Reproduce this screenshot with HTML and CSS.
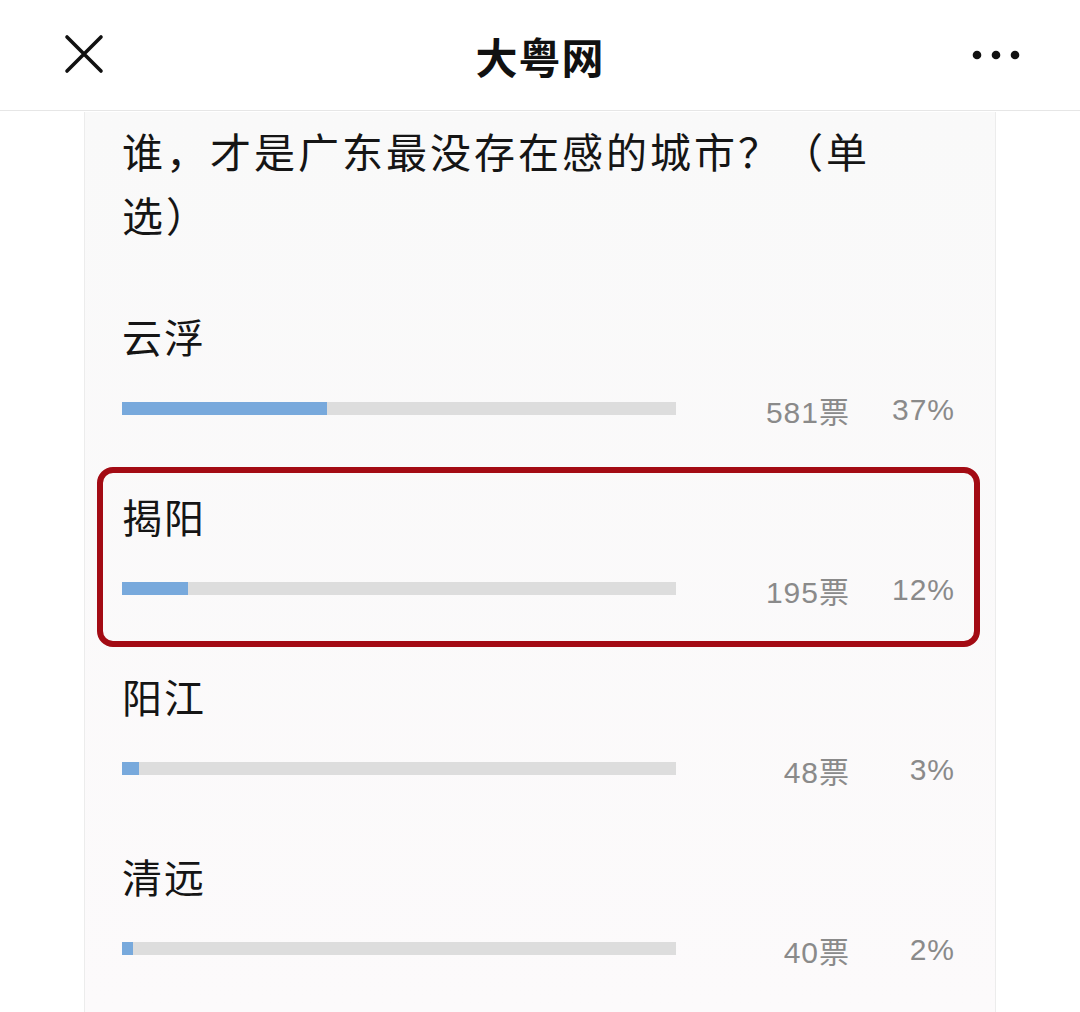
FILE: index.html
```html
<!DOCTYPE html>
<html lang="zh-CN">
<head>
<meta charset="utf-8">
<link rel="stylesheet" href="styles.css">
</head>
<body>
<header class="topbar">
  <svg class="close" width="40" height="40" viewBox="0 0 40 40"><path d="M3 3 L37 37 M37 3 L3 37" stroke="#111" stroke-width="3.6" stroke-linecap="round"/></svg>
  <div class="title">大粤网</div>
  <svg class="more" width="50" height="12" viewBox="0 0 50 12"><circle cx="6" cy="6" r="4.3" fill="#111"/><circle cx="25" cy="6" r="4.3" fill="#111"/><circle cx="44" cy="6" r="4.3" fill="#111"/></svg>
</header>
<main class="card">
  <div class="question">谁，才是广东最没存在感的城市？（单选）</div>
  <div class="options">
    <div class="option">
      <div class="label">云浮</div>
      <div class="row"><div class="bar"><div class="fill" style="width:37%"></div></div><div class="votes">581票</div><div class="pct">37%</div></div>
    </div>
    <div class="option">
      <div class="label">揭阳</div>
      <div class="row"><div class="bar"><div class="fill" style="width:12%"></div></div><div class="votes">195票</div><div class="pct">12%</div></div>
      <div class="highlight"></div>
    </div>
    <div class="option">
      <div class="label">阳江</div>
      <div class="row"><div class="bar"><div class="fill" style="width:3%"></div></div><div class="votes">48票</div><div class="pct">3%</div></div>
    </div>
    <div class="option">
      <div class="label">清远</div>
      <div class="row"><div class="bar"><div class="fill" style="width:2%"></div></div><div class="votes">40票</div><div class="pct">2%</div></div>
    </div>
  </div>
</main>
</body>
</html>
```
FILE: styles.css
```css
* { box-sizing: border-box; }
html, body { margin: 0; padding: 0; }
body {
  width: 1080px;
  height: 1012px;
  overflow: hidden;
  background: #fff;
  font-family: "Noto Sans CJK SC", "Noto Sans", sans-serif;
  color: #111;
}
.topbar {
  height: 111px;
  border-bottom: 1px solid #e6e6e6;
  display: flex;
  align-items: center;
  justify-content: space-between;
  padding: 0 59px 0 64px;
  position: relative;
}
.close { display: block; margin-top: -3px; }
.title {
  position: absolute;
  left: 0; right: 0;
  text-align: center;
  font-size: 42px;
  font-weight: 700;
  letter-spacing: 1px;
  line-height: 111px;
  pointer-events: none;
}
.more { display: block; }
.card {
  margin: 1px 0 0 84px;
  width: 912px;
  height: 900px;
  border-left: 1px solid #ececec;
  border-right: 1px solid #ececec;
  background: linear-gradient(#f9f9f9, #fcfafb);
  padding: 6px 40px 0 37px;
}
.question {
  font-size: 41px;
  line-height: 64px;
  letter-spacing: 3px;
  max-width: 790px;
  color: #151515;
}
.options { margin-top: 20px; }
.option {
  position: relative;
  height: 180px;
  padding-top: 40px;
}
.label {
  font-size: 40px;
  line-height: 60px;
  letter-spacing: 2px;
  color: #151515;
}
.row {
  margin-top: 24px;
  height: 36px;
  display: flex;
  align-items: center;
}
.bar {
  width: 554px;
  height: 13px;
  background: #dddddd;
}
.fill {
  height: 100%;
  background: #78a9dc;
}
.votes, .pct {
  font-family: "Liberation Sans", "Noto Sans CJK SC", sans-serif;
  font-size: 30px;
  letter-spacing: 1px;
  color: #8a8a8a;
  text-align: right;
  padding-top: 3px;
}
.votes {
  flex: 1;
  margin-right: -1px;
}
.pct {
  width: 106px;
}
.highlight {
  position: absolute;
  top: 21px;
  left: -25px;
  right: -25px;
  height: 180px;
  border: 6px solid #a30b14;
  border-radius: 16px;
}
```
